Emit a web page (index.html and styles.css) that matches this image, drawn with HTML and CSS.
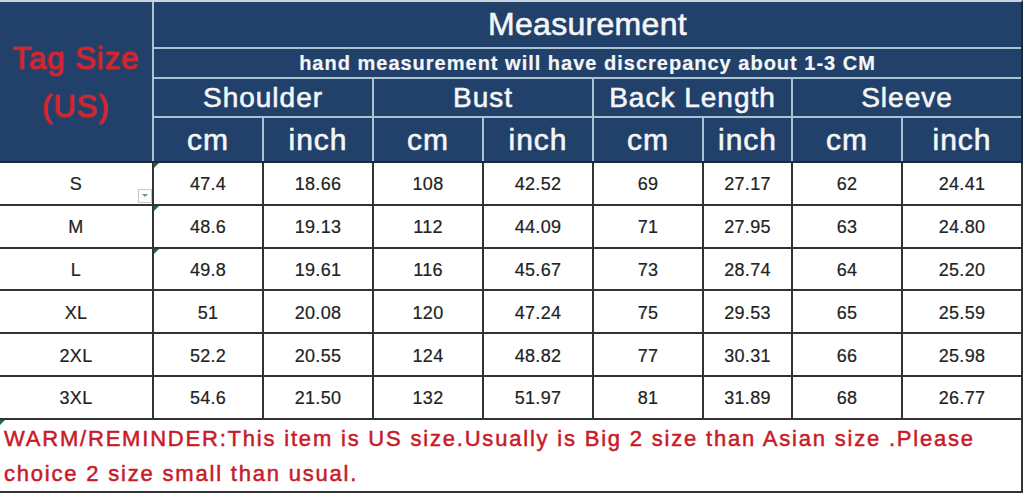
FILE: index.html
```html
<!DOCTYPE html>
<html>
<head>
<meta charset="utf-8">
<link rel="stylesheet" href="styles.css">
</head>
<body>
<div class="chart">
  <div class="head">
    <div class="tag"><span>Tag Size</span><span>(US)</span></div>
    <div class="title">Measurement</div>
    <div class="note">hand measurement will have discrepancy about 1-3 CM</div>
    <div class="grp g2">Shoulder</div>
    <div class="grp g2">Bust</div>
    <div class="grp g2">Back Length</div>
    <div class="grp g2">Sleeve</div>
    <div class="unit">cm</div><div class="unit">inch</div>
    <div class="unit">cm</div><div class="unit">inch</div>
    <div class="unit">cm</div><div class="unit">inch</div>
    <div class="unit">cm</div><div class="unit">inch</div>
  </div>
  <div class="body">
    <div class="c">S<span class="dd"><i></i></span></div><div class="c"><span class="mk"></span>47.4</div><div class="c">18.66</div><div class="c">108</div><div class="c">42.52</div><div class="c">69</div><div class="c">27.17</div><div class="c">62</div><div class="c">24.41</div>
    <div class="c">M</div><div class="c"><span class="mk"></span>48.6</div><div class="c">19.13</div><div class="c">112</div><div class="c">44.09</div><div class="c">71</div><div class="c">27.95</div><div class="c">63</div><div class="c">24.80</div>
    <div class="c">L</div><div class="c"><span class="mk"></span>49.8</div><div class="c">19.61</div><div class="c">116</div><div class="c">45.67</div><div class="c">73</div><div class="c">28.74</div><div class="c">64</div><div class="c">25.20</div>
    <div class="c">XL</div><div class="c">51</div><div class="c">20.08</div><div class="c">120</div><div class="c">47.24</div><div class="c">75</div><div class="c">29.53</div><div class="c">65</div><div class="c">25.59</div>
    <div class="c">2XL</div><div class="c">52.2</div><div class="c">20.55</div><div class="c">124</div><div class="c">48.82</div><div class="c">77</div><div class="c">30.31</div><div class="c">66</div><div class="c">25.98</div>
    <div class="c">3XL</div><div class="c">54.6</div><div class="c">21.50</div><div class="c">132</div><div class="c">51.97</div><div class="c">81</div><div class="c">31.89</div><div class="c">68</div><div class="c">26.77</div>
    <div class="remind"><span class="mk"></span>WARM/REMINDER:This item is US size.Usually is Big 2 size than Asian size .Please choice 2 size small than usual.</div>
  </div>
</div>
</body>
</html>
```
FILE: styles.css
```css
html, body {
  margin: 0;
  padding: 0;
  background: #ffffff;
}
.chart {
  width: 1024px;
  height: 495px;
  font-family: "Liberation Sans", Arial, sans-serif;
  overflow: hidden;
}
.head {
  display: grid;
  grid-template-columns: 152px 108px 108px 108px 108px 108px 87px 108px 118px;
  grid-template-rows: 45px 28px 37px 43px;
  gap: 2px;
  width: 1021px;
  background: #a9c3d2;
  border-top: 2px solid #c9d6dd;
  border-right: 2px solid #1b2a3e;
  border-bottom: 2px solid #1f2a38;
}
.head > div {
  background: #22416a;
  color: #f4f6f8;
  -webkit-text-stroke: 0.6px #f4f6f8;
  display: flex;
  align-items: center;
  justify-content: center;
  white-space: nowrap;
}
.head > .tag {
  grid-row: 1 / 5;
  flex-direction: column;
  color: #d8232d;
  -webkit-text-stroke: 0.7px #d8232d;
  font-size: 31px;
  letter-spacing: 1px;
  line-height: 48px;
  text-shadow: 0 0 2px rgba(235, 70, 80, 0.6);
  padding-top: 2px;
}
.title {
  grid-column: 2 / 10;
  font-size: 32px;
  letter-spacing: 0.3px;
}
.head > .note {
  grid-column: 2 / 10;
  font-size: 20px;
  font-weight: bold;
  letter-spacing: 1px;
  -webkit-text-stroke: 0.2px #f4f6f8;
}
.g2 {
  grid-column: span 2;
  font-size: 28px;
  letter-spacing: 1px;
}
.unit {
  font-size: 30px;
  letter-spacing: 1px;
}
.body {
  display: grid;
  grid-template-columns: 152px 108px 108px 108px 108px 108px 87px 108px 118px;
  grid-template-rows: repeat(6, 40.8px) 71px;
  gap: 2px;
  width: 1021px;
  background: #333333;
  border-right: 2px solid #333333;
  border-bottom: 2px solid #333333;
}
.c {
  background: #ffffff;
  color: #222222;
  -webkit-text-stroke: 0.2px #222222;
  font-size: 18px;
  letter-spacing: 0.3px;
  display: flex;
  align-items: center;
  justify-content: center;
  padding-top: 3px;
  position: relative;
}
.remind {
  grid-column: 1 / 10;
  background: #ffffff;
  color: #c81a28;
  -webkit-text-stroke: 0.5px #c81a28;
  font-size: 22px;
  letter-spacing: 1.8px;
  line-height: 35px;
  padding: 1px 0 0 4px;
  position: relative;
}
.mk {
  position: absolute;
  left: 0;
  top: 0;
  width: 0;
  height: 0;
  border-top: 5px solid #1d6b3a;
  border-right: 5px solid transparent;
}
.dd {
  position: absolute;
  right: 0;
  bottom: 1px;
  width: 12px;
  height: 12px;
  border: 1px solid #c8c8c8;
  background: #ffffff;
  display: flex;
  align-items: center;
  justify-content: center;
  -webkit-text-stroke: 0;
}
.dd i {
  width: 0;
  height: 0;
  border-left: 3px solid transparent;
  border-right: 3px solid transparent;
  border-top: 3px solid #6a9a88;
}
```
